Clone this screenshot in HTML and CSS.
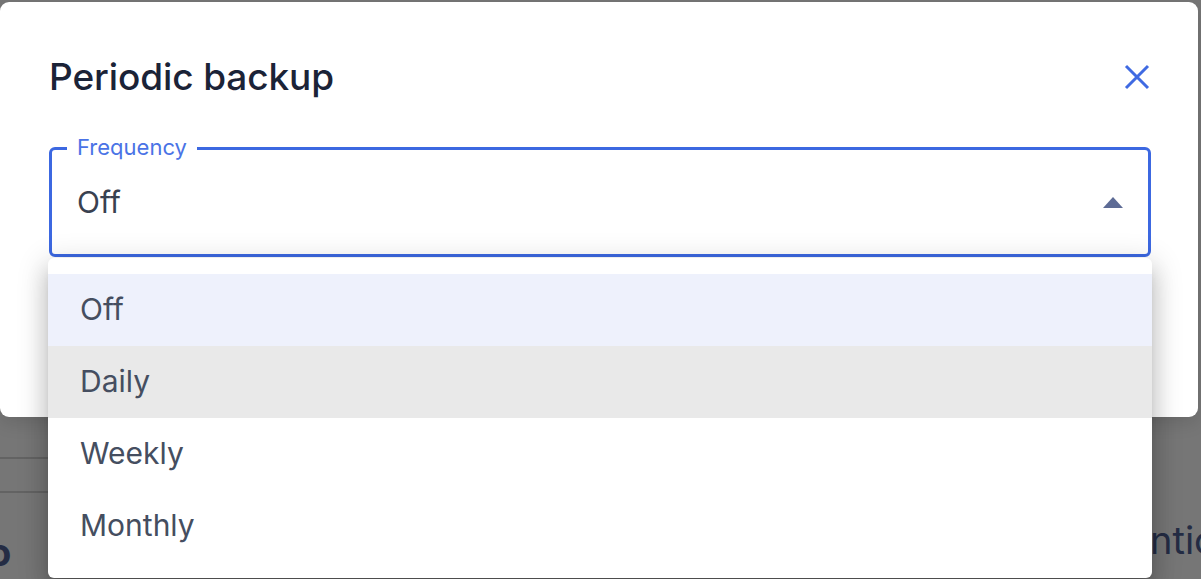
FILE: index.html
```html
<!DOCTYPE html>
<html lang="en">
<head>
<meta charset="utf-8">
<title>Periodic backup</title>
<link rel="stylesheet" href="styles.css">
</head>
<body>
  <div class="page">
    <div class="rule"></div>
    <div class="rule"></div>
    <div class="page-row">
      <span class="page-left">o</span>
      <span class="page-right">ntion</span>
    </div>
  </div>

  <div class="dialog" role="dialog" aria-labelledby="dlg-title">
    <div class="dialog-header">
      <h2 id="dlg-title" class="dialog-title">Periodic backup</h2>
      <button class="close-btn" aria-label="Close">
        <svg width="26" height="26" viewBox="0 0 26 26" aria-hidden="true">
          <path d="M2 2 L24 24 M24 2 L2 24" stroke="currentColor" stroke-width="3" stroke-linecap="butt" fill="none"/>
        </svg>
      </button>
    </div>

    <div class="select">
      <div class="select-field">
        <span class="select-label">Frequency</span>
        <span class="select-value">Off</span>
        <span class="select-arrow"></span>
      </div>
      <ul class="menu" role="listbox">
        <li class="menu-item is-selected" role="option">Off</li>
        <li class="menu-item is-hover" role="option">Daily</li>
        <li class="menu-item" role="option">Weekly</li>
        <li class="menu-item" role="option">Monthly</li>
      </ul>
    </div>
  </div>
</body>
</html>
```

FILE: styles.css
```css
* {
  box-sizing: border-box;
}

html, body {
  margin: 0;
  padding: 0;
  height: 579px;
  overflow: hidden;
}

body {
  background: #767676;
  font-family: "Inter", "Roboto", "Liberation Sans", sans-serif;
  position: relative;
}

/* background page, dimmed by the modal backdrop */
.page {
  padding-top: 457px;
}

.rule {
  height: 2px;
  width: 640px;
  background: #636363;
  margin-bottom: 32px;
}

.page-row {
  display: grid;
  grid-template-columns: 1150px 1fr;
  margin-top: -8px;
  font-size: 38px;
  line-height: 46px;
  color: #242c44;
  white-space: nowrap;
  overflow: hidden;
}

.page-left {
  font-weight: 700;
  padding-top: 12px;
  margin-left: -12px;
}

.page-right {
  font-weight: 400;
}

/* modal */
.dialog {
  position: absolute;
  top: 2px;
  left: 0;
  width: 1198px;
  height: 415px;
  background: #ffffff;
  border-radius: 9px;
  padding: 52px 47px 0 49px;
  box-shadow: 0 6px 18px rgba(0, 0, 0, 0.12);
}

.dialog-header {
  display: flex;
  align-items: center;
  justify-content: space-between;
  height: 46px;
}

.dialog-title {
  margin: 0;
  font-size: 37px;
  line-height: 46px;
  font-weight: 500;
  color: #1b2337;
  letter-spacing: -0.1px;
}

.close-btn {
  display: flex;
  align-items: center;
  justify-content: center;
  width: 26px;
  height: 26px;
  padding: 0;
  margin-right: 1px;
  border: 0;
  background: transparent;
  color: #3f6ae2;
  cursor: pointer;
}

.select {
  position: relative;
  margin-top: 47px;
}

.select-field {
  position: relative;
  display: flex;
  align-items: center;
  justify-content: space-between;
  height: 110px;
  padding: 0 25px;
  border: 3px solid #3c68e1;
  border-radius: 6px;
}

.select-label {
  position: absolute;
  top: -14px;
  left: 15px;
  padding: 0 10px;
  background: #ffffff;
  font-size: 22px;
  line-height: 22px;
  color: #4a73e6;
}

.select-value {
  font-size: 30px;
  line-height: 40px;
  color: #394150;
}

.select-arrow {
  width: 0;
  height: 0;
  border-left: 10px solid transparent;
  border-right: 10px solid transparent;
  border-bottom: 11px solid #5d6b95;
}

.menu {
  position: absolute;
  top: 111px;
  left: -1px;
  right: -1px;
  margin: 0;
  padding: 16px 0;
  list-style: none;
  background: #ffffff;
  border-radius: 6px;
  box-shadow:
    0 10px 10px -6px rgba(0, 0, 0, 0.2),
    0 16px 22px 2px rgba(0, 0, 0, 0.14),
    0 6px 28px 6px rgba(0, 0, 0, 0.12);
  z-index: 2;
}

.menu-item {
  display: flex;
  align-items: center;
  height: 72px;
  padding-left: 32px;
  padding-bottom: 2px;
  font-size: 30px;
  color: #454e60;
}

.menu-item.is-selected {
  background: #eef1fc;
}

.menu-item.is-hover {
  background: #e9e9e9;
}
```
